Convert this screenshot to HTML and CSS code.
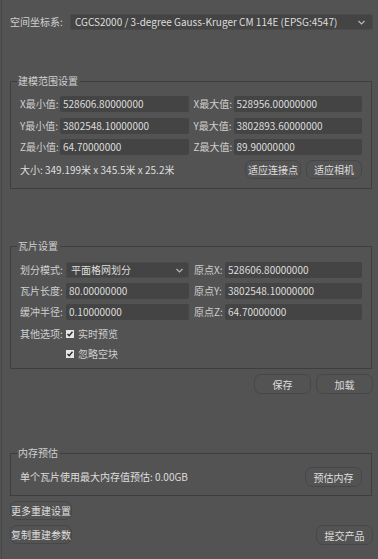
FILE: index.html
```html
<!DOCTYPE html>
<html lang="zh-CN">
<head>
    <meta charset="UTF-8">
    <meta name="viewport" content="width=device-width, initial-scale=1.0">
    <title>重建设置</title>
    <link rel="stylesheet" href="styles.css">
</head>
<body>
    <div class="panel">
        <div class="crs-row">
            <span class="crs-label">空间坐标系:</span>
            <div class="combo">
                <span>CGCS2000 / 3-degree Gauss-Kruger CM 114E (EPSG:4547)</span>
                <svg class="arrow" width="7" height="5" viewBox="0 0 7 5"><path d="M0.5 1 L3.5 4 L6.5 1" fill="none" stroke="#b8b8b8" stroke-width="1.2"/></svg>
            </div>
        </div>

        <fieldset class="group group-range">
            <legend>建模范围设置</legend>
            <div class="grid range-grid">
                <span class="label">X最小值:</span>
                <div class="input">528606.80000000</div>
                <span class="label label-right">X最大值:</span>
                <div class="input">528956.00000000</div>

                <span class="label">Y最小值:</span>
                <div class="input">3802548.10000000</div>
                <span class="label label-right">Y最大值:</span>
                <div class="input">3802893.60000000</div>

                <span class="label">Z最小值:</span>
                <div class="input">64.70000000</div>
                <span class="label label-right">Z最大值:</span>
                <div class="input">89.90000000</div>
            </div>
            <div class="action-row">
                <span class="info">大小: 349.199米 x 345.5米 x 25.2米</span>
                <div class="btn-group">
                    <button class="btn">适应连接点</button>
                    <button class="btn">适应相机</button>
                </div>
            </div>
        </fieldset>

        <fieldset class="group group-tile">
            <legend>瓦片设置</legend>
            <div class="grid tile-grid">
                <span class="label">划分模式:</span>
                <div class="combo combo-small">
                    <span>平面格网划分</span>
                    <svg class="arrow" width="7" height="5" viewBox="0 0 7 5"><path d="M0.5 1 L3.5 4 L6.5 1" fill="none" stroke="#b8b8b8" stroke-width="1.2"/></svg>
                </div>
                <span class="label label-right">原点X:</span>
                <div class="input">528606.80000000</div>

                <span class="label">瓦片长度:</span>
                <div class="input">80.00000000</div>
                <span class="label label-right">原点Y:</span>
                <div class="input">3802548.10000000</div>

                <span class="label">缓冲半径:</span>
                <div class="input">0.10000000</div>
                <span class="label label-right">原点Z:</span>
                <div class="input">64.70000000</div>
            </div>
            <div class="options">
                <div class="option-row">
                    <span class="label">其他选项:</span>
                    <label class="check"><span class="box"><svg width="8" height="8" viewBox="0 0 8 8"><path d="M1.5 4 L3.2 5.8 L6.5 1.8" fill="none" stroke="#2b2b2b" stroke-width="1.4"/></svg></span>实时预览</label>
                </div>
                <div class="option-row">
                    <span class="label"></span>
                    <label class="check"><span class="box"><svg width="8" height="8" viewBox="0 0 8 8"><path d="M1.5 4 L3.2 5.8 L6.5 1.8" fill="none" stroke="#2b2b2b" stroke-width="1.4"/></svg></span>忽略空块</label>
                </div>
            </div>
        </fieldset>

        <div class="save-row">
            <button class="btn btn-wide">保存</button>
            <button class="btn btn-wide">加载</button>
        </div>

        <fieldset class="group group-memory">
            <legend>内存预估</legend>
            <div class="action-row">
                <span class="info">单个瓦片使用最大内存值预估: 0.00GB</span>
                <button class="btn">预估内存</button>
            </div>
        </fieldset>

        <div class="footer">
            <button class="btn btn-left">更多重建设置</button>
            <div class="footer-row">
                <button class="btn btn-left">复制重建参数</button>
                <button class="btn btn-wide">提交产品</button>
            </div>
        </div>
    </div>
</body>
</html>
```

FILE: styles.css
```css
:root {
    --bg: #535353;
    --field: #444444;
    --line: #3e3e3e;
    --text: #dedede;
    --label: #cfcfcf;
}

* {
    margin: 0;
    padding: 0;
    box-sizing: border-box;
}

body {
    background-color: var(--bg);
    color: var(--text);
    font-family: "Noto Sans CJK SC", "Noto Sans", sans-serif;
    font-size: 10px;
    line-height: 14px;
    width: 378px;
    height: 559px;
    overflow: hidden;
}

.panel {
    border-left: 1px solid #474747;
    margin-left: 1px;
    padding: 14px 5px 0 8px;
    height: 100%;
}

.crs-row {
    display: flex;
    align-items: center;
    height: 16px;
}

.crs-label {
    width: 60px;
    color: var(--label);
    white-space: nowrap;
}

.combo {
    flex: 1;
    min-width: 0;
    height: 16px;
    display: flex;
    align-items: center;
    justify-content: space-between;
    background-color: var(--field);
    border: 1px solid #4a4a4a;
    border-radius: 2px;
    padding: 0 7px 0 4px;
    color: var(--text);
    white-space: nowrap;
}

.arrow {
    flex-shrink: 0;
}

.group {
    border: 1px solid var(--line);
    margin: 44px 1px 0 0;
    padding: 8px 9px 9px 9px;
    min-width: 0;
}

.group legend {
    margin-left: -3px;
    padding: 0 2px 0 1px;
    color: var(--label);
    line-height: 14px;
}

.grid {
    display: grid;
    grid-auto-rows: 16px;
    align-items: center;
}

.range-grid {
    grid-template-columns: 40px 1fr 45px 1fr;
    row-gap: 5.5px;
}

.tile-grid {
    grid-template-columns: 46px 123px 36px 1fr;
    row-gap: 5px;
}

.label {
    color: var(--label);
    white-space: nowrap;
}

.label-right {
    padding-left: 5px;
}

.input {
    height: 16px;
    background-color: var(--field);
    border-radius: 2px;
    padding: 0 3px;
    line-height: 16px;
    color: var(--text);
    white-space: nowrap;
    overflow: hidden;
}

.combo-small {
    padding-right: 5px;
}

.action-row {
    display: flex;
    align-items: center;
    justify-content: space-between;
    margin-top: 5px;
}

.info {
    white-space: nowrap;
}

.btn-group {
    display: flex;
    gap: 5px;
}

.btn {
    font-family: inherit;
    font-size: 10px;
    color: var(--text);
    background-color: var(--bg);
    border: 1px solid #474747;
    border-radius: 7px;
    height: 19px;
    width: 56px;
    padding: 0;
    white-space: nowrap;
    cursor: pointer;
}

.group-tile {
    margin-top: 50px;
    padding-top: 9px;
    padding-bottom: 7px;
}

.options {
    margin-top: 7px;
    display: flex;
    flex-direction: column;
    gap: 6px;
}

.option-row {
    display: flex;
    align-items: center;
    height: 14px;
}

.option-row .label {
    width: 46px;
}

.check {
    display: flex;
    align-items: center;
    gap: 4px;
    color: var(--label);
}

.box {
    width: 8px;
    height: 8px;
    background-color: #e6e6e6;
    display: flex;
}

.save-row {
    display: flex;
    justify-content: flex-end;
    gap: 5px;
    margin-top: 5px;
}

.btn-wide {
    width: 57px;
    height: 20px;
}

.group-memory {
    margin-top: 52px;
    padding-top: 7px;
    padding-bottom: 8px;
}

.group-memory .action-row {
    margin-top: 0;
    height: 20px;
}

.group-memory .btn {
    height: 20px;
    width: 57px;
}

.footer {
    margin-top: 5px;
    display: flex;
    flex-direction: column;
    gap: 5px;
}

.footer-row {
    display: flex;
    justify-content: space-between;
}

.btn-left {
    width: 62px;
    border-radius: 7px;
}
```
